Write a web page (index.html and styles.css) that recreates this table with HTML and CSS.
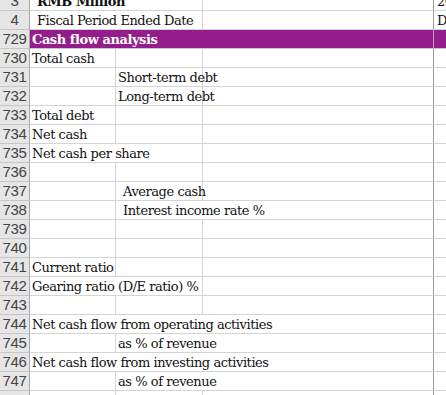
FILE: index.html
```html
<!DOCTYPE html>
<html>
<head>
<meta charset="utf-8">
<link rel="stylesheet" href="styles.css">
</head>
<body>
<div class="sheet">
  <div class="row">
    <div class="hdr">3</div>
    <div class="cell span2 bold ind">RMB Million</div>
    <div class="cell d"></div>
    <div class="cell e">2019</div>
  </div>
  <div class="row">
    <div class="hdr">4</div>
    <div class="cell span2 ind">Fiscal Period Ended Date</div>
    <div class="cell d"></div>
    <div class="cell e">Dec-2019</div>
  </div>
  <div class="row band">
    <div class="hdr">729</div>
    <div class="cell span3 bold">Cash flow analysis</div>
    <div class="cell e"></div>
  </div>
  <div class="row">
    <div class="hdr">730</div>
    <div class="cell b">Total cash</div>
    <div class="cell c"></div>
    <div class="cell d"></div>
    <div class="cell e"></div>
  </div>
  <div class="row">
    <div class="hdr">731</div>
    <div class="cell b"></div>
    <div class="cell c">Short-term debt</div>
    <div class="cell d"></div>
    <div class="cell e"></div>
  </div>
  <div class="row">
    <div class="hdr">732</div>
    <div class="cell b"></div>
    <div class="cell c">Long-term debt</div>
    <div class="cell d"></div>
    <div class="cell e"></div>
  </div>
  <div class="row">
    <div class="hdr">733</div>
    <div class="cell b">Total debt</div>
    <div class="cell c"></div>
    <div class="cell d"></div>
    <div class="cell e"></div>
  </div>
  <div class="row">
    <div class="hdr">734</div>
    <div class="cell b">Net cash</div>
    <div class="cell c"></div>
    <div class="cell d"></div>
    <div class="cell e"></div>
  </div>
  <div class="row">
    <div class="hdr">735</div>
    <div class="cell span2">Net cash per share</div>
    <div class="cell d"></div>
    <div class="cell e"></div>
  </div>
  <div class="row">
    <div class="hdr">736</div>
    <div class="cell b"></div>
    <div class="cell c"></div>
    <div class="cell d"></div>
    <div class="cell e"></div>
  </div>
  <div class="row">
    <div class="hdr">737</div>
    <div class="cell b"></div>
    <div class="cell c ind">Average cash</div>
    <div class="cell d"></div>
    <div class="cell e"></div>
  </div>
  <div class="row">
    <div class="hdr">738</div>
    <div class="cell b"></div>
    <div class="cell span2c ind">Interest income rate %</div>
    <div class="cell e"></div>
  </div>
  <div class="row">
    <div class="hdr">739</div>
    <div class="cell b"></div>
    <div class="cell c"></div>
    <div class="cell d"></div>
    <div class="cell e"></div>
  </div>
  <div class="row">
    <div class="hdr">740</div>
    <div class="cell b"></div>
    <div class="cell c"></div>
    <div class="cell d"></div>
    <div class="cell e"></div>
  </div>
  <div class="row">
    <div class="hdr">741</div>
    <div class="cell b">Current ratio</div>
    <div class="cell c"></div>
    <div class="cell d"></div>
    <div class="cell e"></div>
  </div>
  <div class="row">
    <div class="hdr">742</div>
    <div class="cell span2">Gearing ratio (D/E ratio) %</div>
    <div class="cell d"></div>
    <div class="cell e"></div>
  </div>
  <div class="row">
    <div class="hdr">743</div>
    <div class="cell b"></div>
    <div class="cell c"></div>
    <div class="cell d"></div>
    <div class="cell e"></div>
  </div>
  <div class="row">
    <div class="hdr">744</div>
    <div class="cell span3">Net cash flow from operating activities</div>
    <div class="cell e"></div>
  </div>
  <div class="row">
    <div class="hdr">745</div>
    <div class="cell b"></div>
    <div class="cell span2c">as % of revenue</div>
    <div class="cell e"></div>
  </div>
  <div class="row">
    <div class="hdr">746</div>
    <div class="cell span3">Net cash flow from investing activities</div>
    <div class="cell e"></div>
  </div>
  <div class="row">
    <div class="hdr">747</div>
    <div class="cell b"></div>
    <div class="cell span2c">as % of revenue</div>
    <div class="cell e"></div>
  </div>
  <div class="row">
    <div class="hdr">748</div>
    <div class="cell b"></div>
    <div class="cell c"></div>
    <div class="cell d"></div>
    <div class="cell e"></div>
  </div>
</div>
</body>
</html>
```
FILE: styles.css
```css
html, body {
  margin: 0;
  padding: 0;
  background: #ffffff;
  overflow: hidden;
}
.sheet {
  margin-top: -8px;
  width: 446px;
  overflow: hidden;
}
.row {
  display: grid;
  grid-template-columns: 30px 86px 87px 231px 40px;
  height: 19px;
}
.hdr {
  box-sizing: border-box;
  height: 19px;
  background: #e6e6e6;
  border-right: 1px solid #a9a9a9;
  border-bottom: 1px solid #c6c6c6;
  color: #444444;
  font-family: "Liberation Sans", Arial, sans-serif;
  font-size: 15px;
  line-height: 18px;
  text-align: center;
  letter-spacing: -0.3px;
}
.cell {
  box-sizing: border-box;
  height: 19px;
  border-right: 1px solid #d4d4d4;
  border-bottom: 1px solid #d4d4d4;
  font-family: "DejaVu Serif", "Liberation Serif", serif;
  font-size: 13px;
  line-height: 19px;
  color: #111111;
  padding-left: 2px;
  white-space: nowrap;
  overflow: visible;
  letter-spacing: -0.45px;
}
.span2 { grid-column: span 2; }
.span2c { grid-column: span 2; }
.span3 { grid-column: span 3; }
.d, .span3, .span2c { border-right: 1px solid #9c9c9c; }
.e { border-right: none; overflow: hidden; padding-left: 3px; }
.ind { padding-left: 7px; }
.bold { font-weight: bold; }
.band .cell {
  background: #931e8b;
  color: #ffffff;
  border-bottom-color: #c9c9c9;
}
.band .span3 { border-right-color: #c79ac3; }
```
